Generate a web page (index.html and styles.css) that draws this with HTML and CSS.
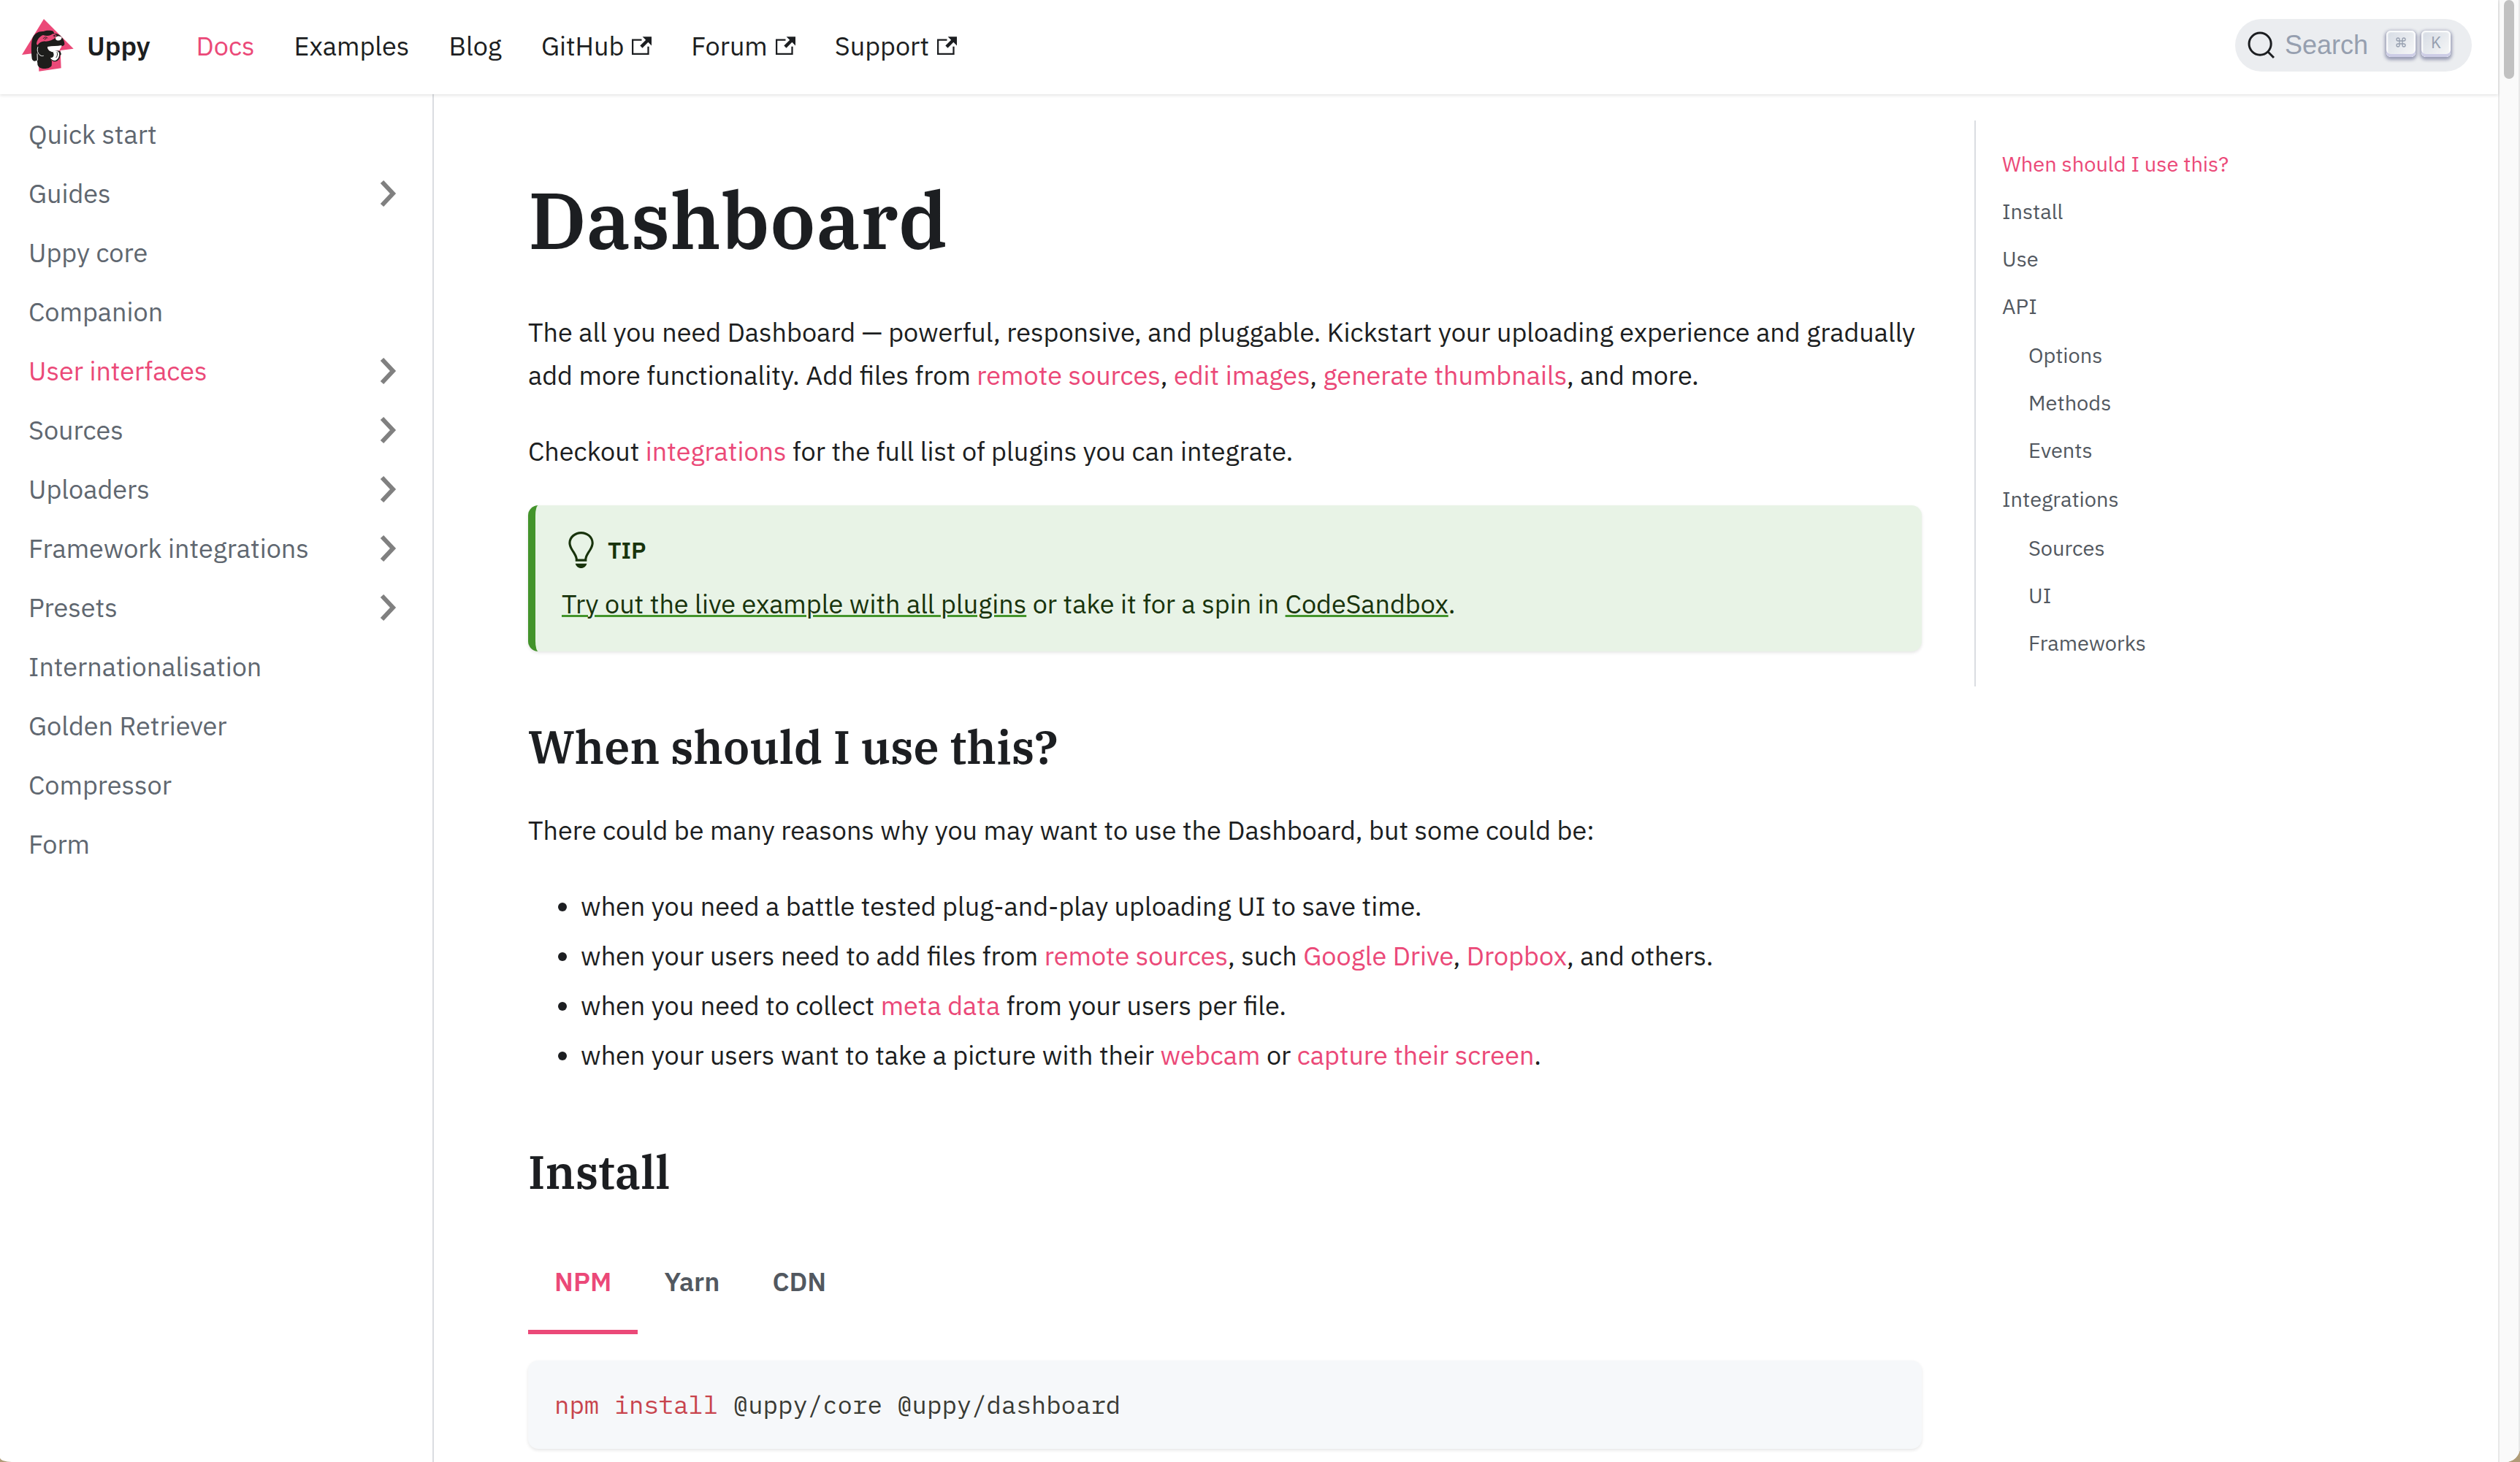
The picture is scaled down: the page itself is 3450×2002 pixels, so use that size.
FILE: index.html
```html
<!DOCTYPE html>
<html lang="en">
<head>
<meta charset="utf-8">
<meta name="viewport" content="width=device-width, initial-scale=1">
<title>Dashboard | Uppy</title>
<link rel="stylesheet" href="styles.css">
</head>
<body>
<svg class="sprite" aria-hidden="true">
  <symbol id="external" viewBox="0 0 24 24"><path fill="currentColor" d="M21 13v10h-21v-19h12v2h-10v15h17v-8h2zm3-12h-10.988l4.035 4-6.977 7.07 2.828 2.828 6.977-7.07 4.125 4.172v-11z"/></symbol>
  <symbol id="chevron" viewBox="0 0 24 36"><path fill="none" stroke="currentColor" stroke-width="6" d="M3 2l15 16L3 34"/></symbol>
</svg>
<div class="shell">
  <div class="page">
    <header class="navbar">
      <a class="brand" href="#">
        <svg class="logo" viewBox="51 48 231 216" aria-hidden="true">
          <path fill="#eb4978" d="M150 48L272 170L218 177L221 250L130 263L126 187L60 195z"/>
          <path fill="#1d1d1b" d="M104 125C112 108 128 98 148 99C160 95 178 94 189 99L193 108C205 108 216 114 223 122C232 132 235 142 235 152C232 159 222 160 212 161C190 160 176 161 166 166C166 174 174 178 178 182C175 200 177 212 183 222L182 240C176 250 160 253 148 252C134 251 123 242 124 230L122 217C115 224 104 223 101 211C98 180 97 145 104 125z"/>
          <path fill="#eb4978" d="M120 151C121 134 132 120 147 114C158 118 170 118 180 113C188 107 196 108 202 115L200 124C187 134 172 140 158 140C143 137 131 145 124 156z"/>
          <path fill="none" stroke="#1d1d1b" stroke-width="3" d="M147 129C152 121 161 121 166 127M152 131L161 128M188 117L199 114M191 121L198 119"/>
          <path fill="#fff" d="M199 123C205 116 219 117 224 124C223 134 214 139 204 136C198 133 197 128 199 123z"/>
          <path fill="#1d1d1b" d="M176 181C188 172 205 177 214 179L217 181C220 187 223 192 220 196L217 197C217 210 209 221 196 223C186 222 178 216 175 209z"/>
          <path fill="#fff" d="M165 162C185 158 205 160 223 156C224 165 217 168 214 178C204 177 194 179 187 184C173 181 165 174 165 162z"/>
          <path fill="#fff" d="M187 182C200 177 211 180 213 189C215 202 208 216 196 219C187 219 179 213 177 207C190 208 195 196 187 182z"/>
          <path fill="none" stroke="#1d1d1b" stroke-width="3" d="M204 184C207 192 206 201 200 207"/>
          <path fill="none" stroke="#fff" stroke-width="3" d="M126 162C121 176 124 189 135 197C140 201 145 200 149 199M123 190L124 218"/>
        </svg>
        <b class="brand-name">Uppy</b>
      </a>
      <nav class="nav-links" aria-label="Main">
        <a class="nav-link active" href="#">Docs</a>
        <a class="nav-link" href="#">Examples</a>
        <a class="nav-link" href="#">Blog</a>
        <a class="nav-link" href="#">GitHub<svg class="external" aria-hidden="true"><use href="#external"/></svg></a>
        <a class="nav-link" href="#">Forum<svg class="external" aria-hidden="true"><use href="#external"/></svg></a>
        <a class="nav-link" href="#">Support<svg class="external" aria-hidden="true"><use href="#external"/></svg></a>
      </nav>
      <button class="search" type="button" aria-label="Search">
        <svg class="search-icon" viewBox="0 0 20 20" aria-hidden="true"><path fill="none" stroke="currentColor" stroke-width="1.5" stroke-linecap="round" d="M14.386 14.386l4.0877 4.0877-4.0877-4.0877c-2.9418 2.9419-7.7115 2.9419-10.6533 0-2.9419-2.9418-2.9419-7.7115 0-10.6533 2.9418-2.9419 7.7115-2.9419 10.6533 0 2.9419 2.9418 2.9419 7.7115 0 10.6533z"/></svg>
        <span class="search-text">Search</span>
        <span class="keys">
          <kbd class="key"><svg class="command" viewBox="0 0 24 24" aria-hidden="true"><path fill="none" stroke="currentColor" stroke-width="2" d="M18 3a3 3 0 0 0-3 3v12a3 3 0 1 0 3-3H6a3 3 0 1 0 3 3V6a3 3 0 1 0-3 3h12a3 3 0 1 0 0-6"/></svg></kbd>
          <kbd class="key">K</kbd>
        </span>
      </button>
    </header>
    <div class="columns">
      <nav class="sidebar" aria-label="Docs sidebar">
        <ul class="menu">
          <li><a class="menu-link" href="#">Quick start</a></li>
          <li><a class="menu-link" href="#">Guides<svg class="chevron" aria-hidden="true"><use href="#chevron"/></svg></a></li>
          <li><a class="menu-link" href="#">Uppy core</a></li>
          <li><a class="menu-link" href="#">Companion</a></li>
          <li><a class="menu-link active" href="#">User interfaces<svg class="chevron" aria-hidden="true"><use href="#chevron"/></svg></a></li>
          <li><a class="menu-link" href="#">Sources<svg class="chevron" aria-hidden="true"><use href="#chevron"/></svg></a></li>
          <li><a class="menu-link" href="#">Uploaders<svg class="chevron" aria-hidden="true"><use href="#chevron"/></svg></a></li>
          <li><a class="menu-link" href="#">Framework integrations<svg class="chevron" aria-hidden="true"><use href="#chevron"/></svg></a></li>
          <li><a class="menu-link" href="#">Presets<svg class="chevron" aria-hidden="true"><use href="#chevron"/></svg></a></li>
          <li><a class="menu-link" href="#">Internationalisation</a></li>
          <li><a class="menu-link" href="#">Golden Retriever</a></li>
          <li><a class="menu-link" href="#">Compressor</a></li>
          <li><a class="menu-link" href="#">Form</a></li>
        </ul>
      </nav>
      <main class="container">
        <article class="article">
          <h1>Dashboard</h1>
          <p>The all you need Dashboard — powerful, responsive, and pluggable. Kickstart your uploading experience and gradually add more functionality. Add files from <a href="#">remote sources</a>, <a href="#">edit images</a>, <a href="#">generate thumbnails</a>, and more.</p>
          <p>Checkout <a href="#">integrations</a> for the full list of plugins you can integrate.</p>
          <aside class="tip">
            <div class="tip-heading"><svg class="tip-icon" viewBox="0 0 12 16" aria-hidden="true"><path fill="currentColor" fill-rule="evenodd" d="M6.5 0C3.48 0 1 2.19 1 5c0 .92.55 2.25 1 3 1.34 2.25 1.78 2.78 2 4v1h5v-1c.22-1.22.66-1.75 2-4 .45-.75 1-2.08 1-3 0-2.81-2.48-5-5.5-5zm3.64 7.48c-.25.44-.47.8-.67 1.11-.86 1.41-1.25 2.06-1.45 3.23-.02.05-.02.11-.02.17H5c0-.06 0-.13-.02-.17-.2-1.17-.59-1.83-1.45-3.23-.2-.31-.42-.67-.67-1.11C2.44 6.78 2 5.65 2 5c0-2.2 2.02-4 4.5-4 1.22 0 2.36.42 3.22 1.19C10.55 2.94 11 3.94 11 5c0 .66-.44 1.78-.86 2.48zM4 14h5c-.23 1.14-1.3 2-2.5 2s-2.27-.86-2.5-2z"/></svg>TIP</div>
            <p><a href="#">Try out the live example with all plugins</a> or take it for a spin in <a href="#">CodeSandbox</a>.</p>
          </aside>
          <h2>When should I use this?</h2>
          <p>There could be many reasons why you may want to use the Dashboard, but some could be:</p>
          <ul class="reasons">
            <li>when you need a battle tested plug-and-play uploading UI to save time.</li>
            <li>when your users need to add files from <a href="#">remote sources</a>, such <a href="#">Google Drive</a>, <a href="#">Dropbox</a>, and others.</li>
            <li>when you need to collect <a href="#">meta data</a> from your users per file.</li>
            <li>when your users want to take a picture with their <a href="#">webcam</a> or <a href="#">capture their screen</a>.</li>
          </ul>
          <h2>Install</h2>
          <div class="tabs" role="tablist">
            <button class="tab selected" type="button" role="tab" aria-selected="true">NPM</button>
            <button class="tab" type="button" role="tab" aria-selected="false">Yarn</button>
            <button class="tab" type="button" role="tab" aria-selected="false">CDN</button>
          </div>
          <pre class="code"><code><span class="command-name">npm install</span> @uppy/core @uppy/dashboard</code></pre>
        </article>
        <nav class="toc" aria-label="On this page">
          <ul class="toc-list">
            <li><a class="active" href="#">When should I use this?</a></li>
            <li><a href="#">Install</a></li>
            <li><a href="#">Use</a></li>
            <li><a href="#">API</a>
              <ul>
                <li><a href="#">Options</a></li>
                <li><a href="#">Methods</a></li>
                <li><a href="#">Events</a></li>
              </ul>
            </li>
            <li><a href="#">Integrations</a>
              <ul>
                <li><a href="#">Sources</a></li>
                <li><a href="#">UI</a></li>
                <li><a href="#">Frameworks</a></li>
              </ul>
            </li>
          </ul>
        </nav>
      </main>
    </div>
  </div>
  <div class="scrollbar" aria-hidden="true"><div class="thumb"></div></div>
</div>
</body>
</html>
```
FILE: styles.css
```css
:root {
  --pink: #eb4978;
  --ink: #1c1e21;
  --line: #dadde1;
  --green: #43942b;
  --sans: "IBM Plex Sans", Roboto, sans-serif;
}

* { box-sizing: border-box; }

html { background: #b09c78; }

body {
  margin: 0;
  color: var(--ink);
  font: 36px/59px var(--sans);
}

ul, p, h1, h2, pre { margin: 0; padding: 0; }
a { color: var(--pink); text-decoration: none; }
button { border: 0; background: none; font: inherit; cursor: pointer; }

.sprite { display: none; }

.shell {
  display: flex;
  min-height: 100vh;
  overflow: hidden;
  background: #fff;
  border-radius: 0 0 20px 16px / 0 0 20px 6px;
}

.page { display: flex; flex: 1; flex-direction: column; min-width: 0; }

/* Top bar */
.navbar {
  position: relative;
  display: flex;
  align-items: center;
  padding: 26px 36px 31px 27px;
  background: #fff;
  box-shadow: 0 2px 4px rgba(0, 0, 0, .1);
}

.brand { display: flex; align-items: center; gap: 15px; margin-right: 36px; color: var(--ink); }
.logo { width: 77px; height: 72px; }
.brand-name { font-weight: 600; }
.nav-links { display: flex; flex: 1; }
.nav-link { padding: 0 27px; color: var(--ink); }
.nav-link.active { color: var(--pink); }
.external { width: 27px; height: 27px; margin-left: 11px; }

.search {
  display: flex;
  align-items: center;
  height: 72px;
  padding: 0 29px 0 16px;
  border-radius: 36px;
  background: #ebedf0;
  color: var(--ink);
  font: 36px/40px "Liberation Sans", Arial, sans-serif;
}

.search-icon { width: 40px; height: 40px; }
.search-text { margin: 0 25px 0 12px; color: #969faf; }
.keys { display: flex; gap: 8px; margin-bottom: 4px; }

.key {
  display: flex;
  align-items: center;
  justify-content: center;
  width: 40px;
  height: 36px;
  padding-bottom: 4px;
  border-radius: 6px;
  background: linear-gradient(-225deg, #d5dbe4, #f8f8f8);
  box-shadow: inset 0 -4px 0 #cdcde6, inset 0 0 2px 2px #fff, 0 2px 4px 2px rgba(30, 35, 90, .4);
  color: #969faf;
  font: 22px/32px var(--sans);
}

.command { width: 16px; height: 16px; }

/* Columns under the bar */
.columns { display: flex; flex: 1; }

.sidebar {
  flex: 0 0 594px;
  padding: 18px;
  border-right: 2px solid var(--line);
}

.menu { display: flex; flex-direction: column; gap: 9px; list-style: none; }

.menu-link {
  display: flex;
  align-items: center;
  justify-content: space-between;
  padding: 14px 30px 13px 21px;
  color: #606770;
  line-height: 45px;
}

.menu-link.active { color: var(--pink); }
.chevron { width: 24px; height: 36px; color: #808080; }

.container {
  display: flex;
  align-items: flex-start;
  flex: 1;
  max-width: 2640px;
  margin: 0 auto;
}

/* Article */
.article { flex: 0 0 75%; min-width: 0; padding: 104px 36px 16px; }
.article > p, .tip, .reasons { margin-bottom: 45px; }

h1, h2 { font-family: "IBM Plex Serif", "DejaVu Serif Condensed", serif; font-weight: 600; }
h1 { margin-bottom: 57px; font-size: 108px; line-height: 135px; }
h2 { margin: 90px 0 45px; font-size: 63px; line-height: 80px; }

.tip {
  padding: 36px;
  border-left: 10px solid var(--green);
  border-radius: 14px;
  background: #e8f3e6;
  box-shadow: 0 2px 4px rgba(0, 0, 0, .1);
  color: #18330c;
}

.tip-heading {
  display: flex;
  align-items: center;
  gap: 13px;
  margin-bottom: 19px;
  font-size: 32px;
  font-weight: 600;
  line-height: 50px;
}

.tip-icon { width: 50px; height: 50px; }

.tip a {
  color: inherit;
  text-decoration: underline;
  text-decoration-color: var(--green);
  text-decoration-thickness: 3px;
}

.reasons { display: flex; flex-direction: column; gap: 9px; padding-left: 72px; }

.tabs { display: flex; margin-bottom: 36px; }

.tab {
  padding: 36px 36px 37px;
  border-bottom: 6px solid transparent;
  color: #525860;
  font-weight: 600;
}

.tab.selected { border-color: var(--pink); color: var(--pink); }

.code {
  padding: 36px;
  border-radius: 14px;
  background: #f6f8fa;
  box-shadow: 0 2px 4px rgba(0, 0, 0, .1);
  color: #393a34;
  font: 34px/49px "IBM Plex Mono", "Liberation Mono", monospace;
}

.code code { font: inherit; }
.command-name { color: #c8444d; }

/* Table of contents */
.toc { flex: 0 0 25%; padding: 36px; }

.toc-list {
  padding: 36px;
  border-left: 2px solid var(--line);
  font-size: 29px;
  line-height: 47px;
}

.toc ul { list-style: none; }
.toc-list ul { margin: 20px 0; padding-left: 36px; }
.toc-list li + li { margin-top: 18px; }
.toc-list > li:last-child ul { margin-bottom: 0; }
.toc a { display: block; color: #525860; }
.toc a.active { color: var(--pink); }

/* Scroll track */
.scrollbar {
  flex: 0 0 30px;
  padding: 0 6px;
  border: solid #e8e8e8;
  border-width: 0 2px;
  background: #fafafa;
}

.thumb { height: 108px; border-radius: 8px; background: #c1c1c1; }
```
